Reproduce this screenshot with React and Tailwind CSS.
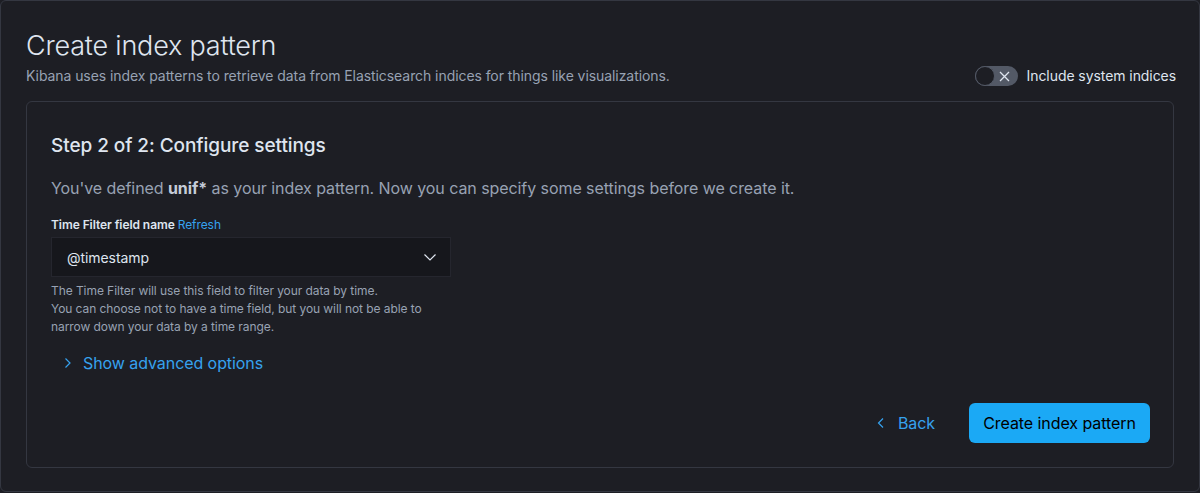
import React from 'react';

const font = { fontFamily: 'Inter, "Noto Sans", sans-serif', letterSpacing: '-0.07px' };

export default function App() {
  return (
    <div className="w-[1200px] h-[493px] bg-[#1d1e24] overflow-hidden" style={font}>
      <div className="h-[492px] rounded-md border border-[#343741] bg-[#1d1e24] px-[25px] pt-[28px]">
        {/* Header */}
        <div className="flex items-end justify-between">
          <div>
            <h1 className="text-[27px] leading-[34px] font-light text-[#dfe5ef] tracking-[-0.2px]">Create index pattern</h1>
            <p className="text-[14px] leading-[20px] text-[#98a2b3] mt-[3px]">
              Kibana uses index patterns to retrieve data from Elasticsearch indices for things like visualizations.
            </p>
          </div>
          <div className="flex items-center gap-[9px] mr-[-2px]">
            <div className="relative w-[43px] h-[20px] rounded-full bg-[#535966] flex items-center">
              <div className="absolute left-0 top-0 w-[20px] h-[20px] rounded-full bg-[#1d1e24] border border-[#535966]" />
              <svg className="absolute left-[24px] top-[5px]" width="11" height="11" viewBox="0 0 11 11">
                <path d="M1 1L10 10M10 1L1 10" stroke="#dfe5ef" strokeWidth="1.3" />
              </svg>
            </div>
            <span className="text-[14px] text-[#dfe5ef]">Include system indices</span>
          </div>
        </div>

        {/* Panel */}
        <div className="mt-[15px] h-[367px] rounded-md border border-[#343741] px-[24px] pt-[31px]">
          <h2 className="text-[19px] leading-[26px] font-medium text-[#dfe5ef]">Step 2 of 2: Configure settings</h2>
          <p className="mt-[17px] text-[16px] leading-[24px] text-[#98a2b3]">
            You've defined <strong className="font-bold text-[#c5ccd8]">unif*</strong> as your index pattern. Now you can specify some settings before we create it.
          </p>

          <div className="mt-[16px] w-[400px]">
            <div className="text-[12px] leading-[18px] font-semibold text-[#dfe5ef]">
              Time Filter field name <span className="font-normal text-[#36a2ef]">Refresh</span>
            </div>
            <div className="mt-[3px] h-[40px] bg-[#16171c] border border-[#25262e] flex items-center justify-between pl-[15px] pr-[12px]">
              <span className="text-[14px] text-[#dfe5ef]">@timestamp</span>
              <svg width="16" height="16" viewBox="0 0 16 16">
                <path d="M2.5 5.5L8 11L13.5 5.5" stroke="#dfe5ef" strokeWidth="1.2" fill="none" />
              </svg>
            </div>
            <p className="mt-[5px] text-[12px] leading-[18px] text-[#98a2b3]">
              The Time Filter will use this field to filter your data by time.<br />
              You can choose not to have a time field, but you will not be able to narrow down your data by a time range.
            </p>
          </div>

          <div className="mt-[15px] ml-[11px] flex items-center gap-[9px] text-[#36a2ef]">
            <svg width="12" height="12" viewBox="0 0 12 12">
              <path d="M3.5 1.5L8 6L3.5 10.5" stroke="#36a2ef" strokeWidth="1.2" fill="none" />
            </svg>
            <span className="text-[16px] leading-[24px]">Show advanced options</span>
          </div>

          <div className="mt-[28px] flex justify-end items-center gap-[34px]">
            <div className="flex items-center gap-[11px] text-[#36a2ef]">
              <svg width="12" height="12" viewBox="0 0 12 12">
                <path d="M8 1.5L3.5 6L8 10.5" stroke="#36a2ef" strokeWidth="1.2" fill="none" />
              </svg>
              <span className="text-[16px]">Back</span>
            </div>
            <button className="h-[40px] w-[181px] flex items-center justify-center rounded-[6px] bg-[#1ba9f5] text-[16px] text-[#000000] mr-[-1px]">
              Create index pattern
            </button>
          </div>
        </div>
      </div>
    </div>
  );
}
